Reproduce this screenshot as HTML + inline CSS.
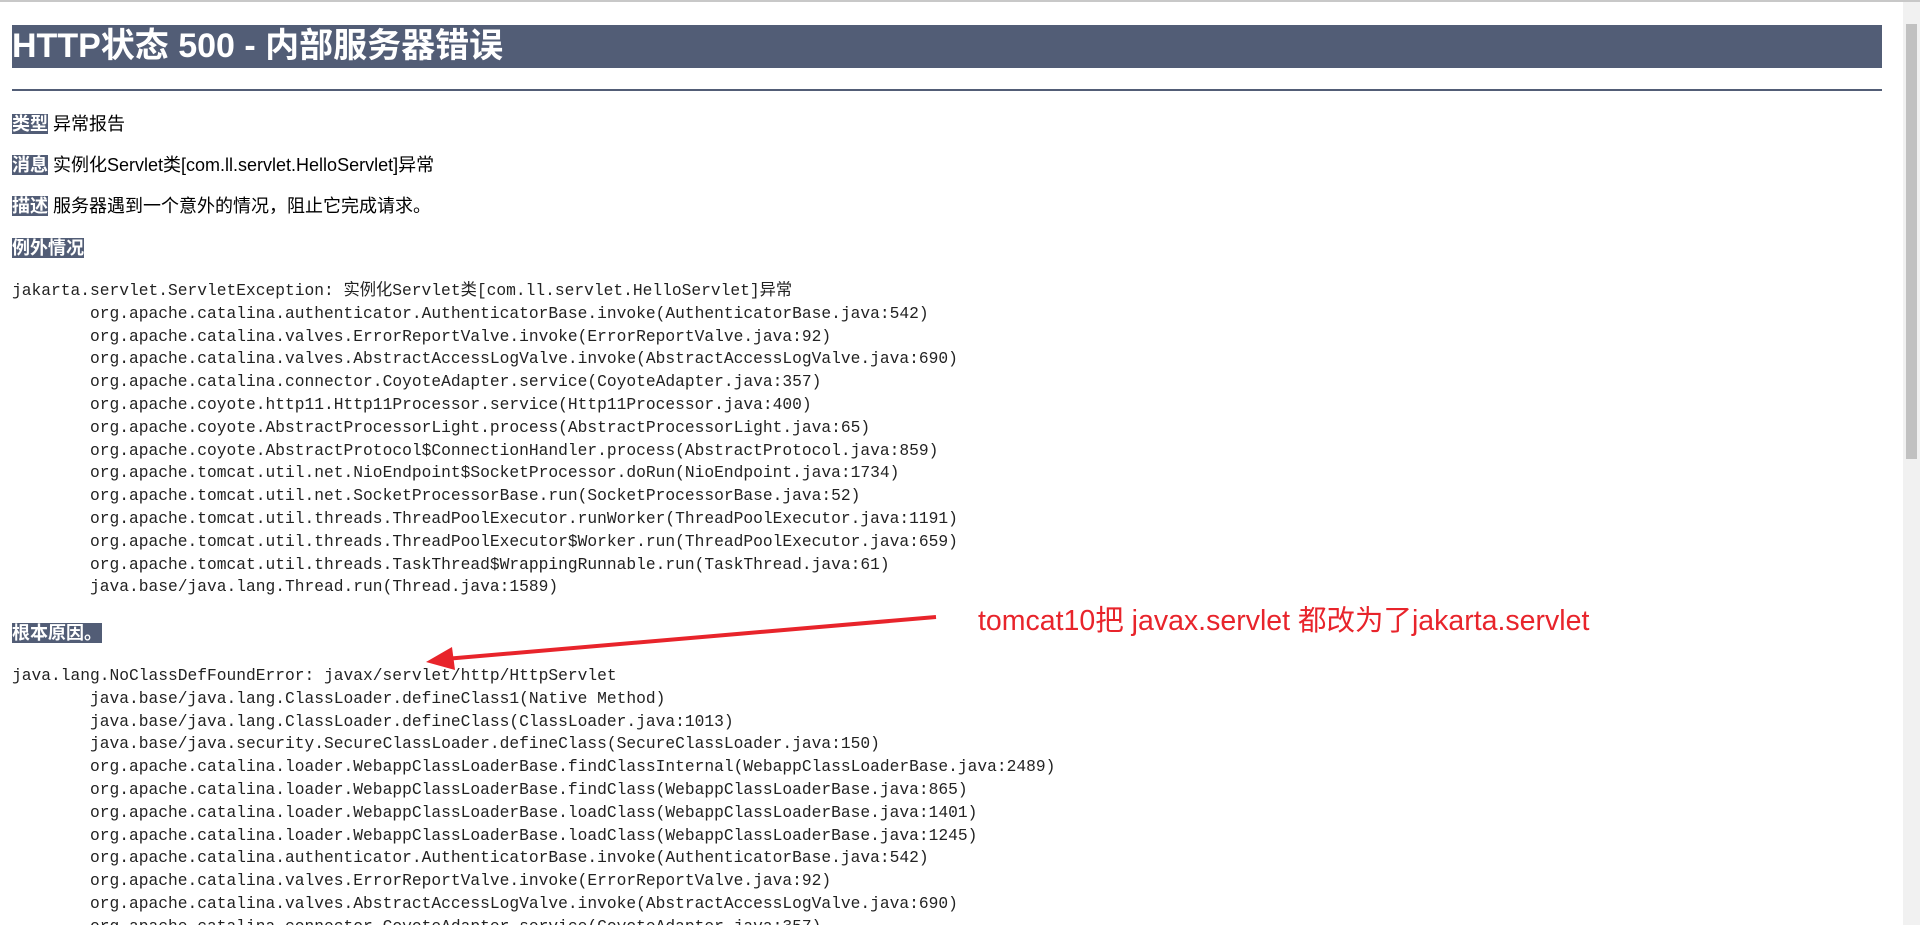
<!DOCTYPE html>
<html><head><meta charset="utf-8"><style>
html,body{margin:0;padding:0;background:#fff;overflow:hidden}
body{width:1920px;height:925px;position:relative;border-top:2px solid #c8c8c8;box-sizing:border-box;font-family:"Liberation Sans","Noto Sans CJK SC",sans-serif;color:#000}
.sb{position:absolute;right:0;top:0;width:17px;height:925px;background:#f1f1f1}
.sb i{position:absolute;left:3px;top:22px;width:11px;height:435px;background:#c1c1c1}
.wrap{position:absolute;left:12px;top:0;width:1870px}
h1{position:absolute;top:23px;left:0;width:1870px;height:43px;margin:0;background:#525D76;color:#fff;font-size:34px;font-weight:bold;line-height:43px;letter-spacing:0px}
hr{position:absolute;top:87px;left:0;width:1870px;margin:0;border:0;height:2px;background:#525D76}
p{position:absolute;left:0;margin:0;font-size:18px;line-height:22px}
b.l{background:#525D76;color:#fff;font-weight:bold}
pre{position:absolute;left:0;margin:0;font-family:"Liberation Mono","Noto Sans CJK SC",monospace;font-size:16.25px;line-height:22.8px;color:#222}
.note{position:absolute;left:978px;top:596px;color:#e8242b;font-size:28.5px;font-family:"Liberation Sans","Noto Sans CJK SC",sans-serif}
</style></head><body>
<div class="wrap">
<h1>HTTP状态 500 - 内部服务器错误</h1>
<hr>
<p style="top:111px"><b class="l">类型</b> 异常报告</p>
<p style="top:152px"><b class="l">消息</b> 实例化Servlet类[com.ll.servlet.HelloServlet]异常</p>
<p style="top:193px"><b class="l">描述</b> 服务器遇到一个意外的情况，阻止它完成请求。</p>
<p style="top:235px"><b class="l">例外情况</b></p>
<pre style="top:278px">jakarta.servlet.ServletException: 实例化Servlet类[com.ll.servlet.HelloServlet]异常
	org.apache.catalina.authenticator.AuthenticatorBase.invoke(AuthenticatorBase.java:542)
	org.apache.catalina.valves.ErrorReportValve.invoke(ErrorReportValve.java:92)
	org.apache.catalina.valves.AbstractAccessLogValve.invoke(AbstractAccessLogValve.java:690)
	org.apache.catalina.connector.CoyoteAdapter.service(CoyoteAdapter.java:357)
	org.apache.coyote.http11.Http11Processor.service(Http11Processor.java:400)
	org.apache.coyote.AbstractProcessorLight.process(AbstractProcessorLight.java:65)
	org.apache.coyote.AbstractProtocol$ConnectionHandler.process(AbstractProtocol.java:859)
	org.apache.tomcat.util.net.NioEndpoint$SocketProcessor.doRun(NioEndpoint.java:1734)
	org.apache.tomcat.util.net.SocketProcessorBase.run(SocketProcessorBase.java:52)
	org.apache.tomcat.util.threads.ThreadPoolExecutor.runWorker(ThreadPoolExecutor.java:1191)
	org.apache.tomcat.util.threads.ThreadPoolExecutor$Worker.run(ThreadPoolExecutor.java:659)
	org.apache.tomcat.util.threads.TaskThread$WrappingRunnable.run(TaskThread.java:61)
	java.base/java.lang.Thread.run(Thread.java:1589)
</pre>
<p style="top:620px"><b class="l">根本原因。</b></p>
<pre style="top:663px">java.lang.NoClassDefFoundError: javax/servlet/http/HttpServlet
	java.base/java.lang.ClassLoader.defineClass1(Native Method)
	java.base/java.lang.ClassLoader.defineClass(ClassLoader.java:1013)
	java.base/java.security.SecureClassLoader.defineClass(SecureClassLoader.java:150)
	org.apache.catalina.loader.WebappClassLoaderBase.findClassInternal(WebappClassLoaderBase.java:2489)
	org.apache.catalina.loader.WebappClassLoaderBase.findClass(WebappClassLoaderBase.java:865)
	org.apache.catalina.loader.WebappClassLoaderBase.loadClass(WebappClassLoaderBase.java:1401)
	org.apache.catalina.loader.WebappClassLoaderBase.loadClass(WebappClassLoaderBase.java:1245)
	org.apache.catalina.authenticator.AuthenticatorBase.invoke(AuthenticatorBase.java:542)
	org.apache.catalina.valves.ErrorReportValve.invoke(ErrorReportValve.java:92)
	org.apache.catalina.valves.AbstractAccessLogValve.invoke(AbstractAccessLogValve.java:690)
	org.apache.catalina.connector.CoyoteAdapter.service(CoyoteAdapter.java:357)
</pre>
</div>
<div class="note">tomcat10把 javax.servlet 都改为了jakarta.servlet</div>
<svg style="position:absolute;left:0;top:0" width="1920" height="925">
<line x1="936" y1="615" x2="445" y2="657" stroke="#e8242b" stroke-width="4"/>
<polygon points="426,660 452,645 455,668" fill="#e8242b"/>
</svg>
<div class="sb"><i></i></div>
</body></html>
